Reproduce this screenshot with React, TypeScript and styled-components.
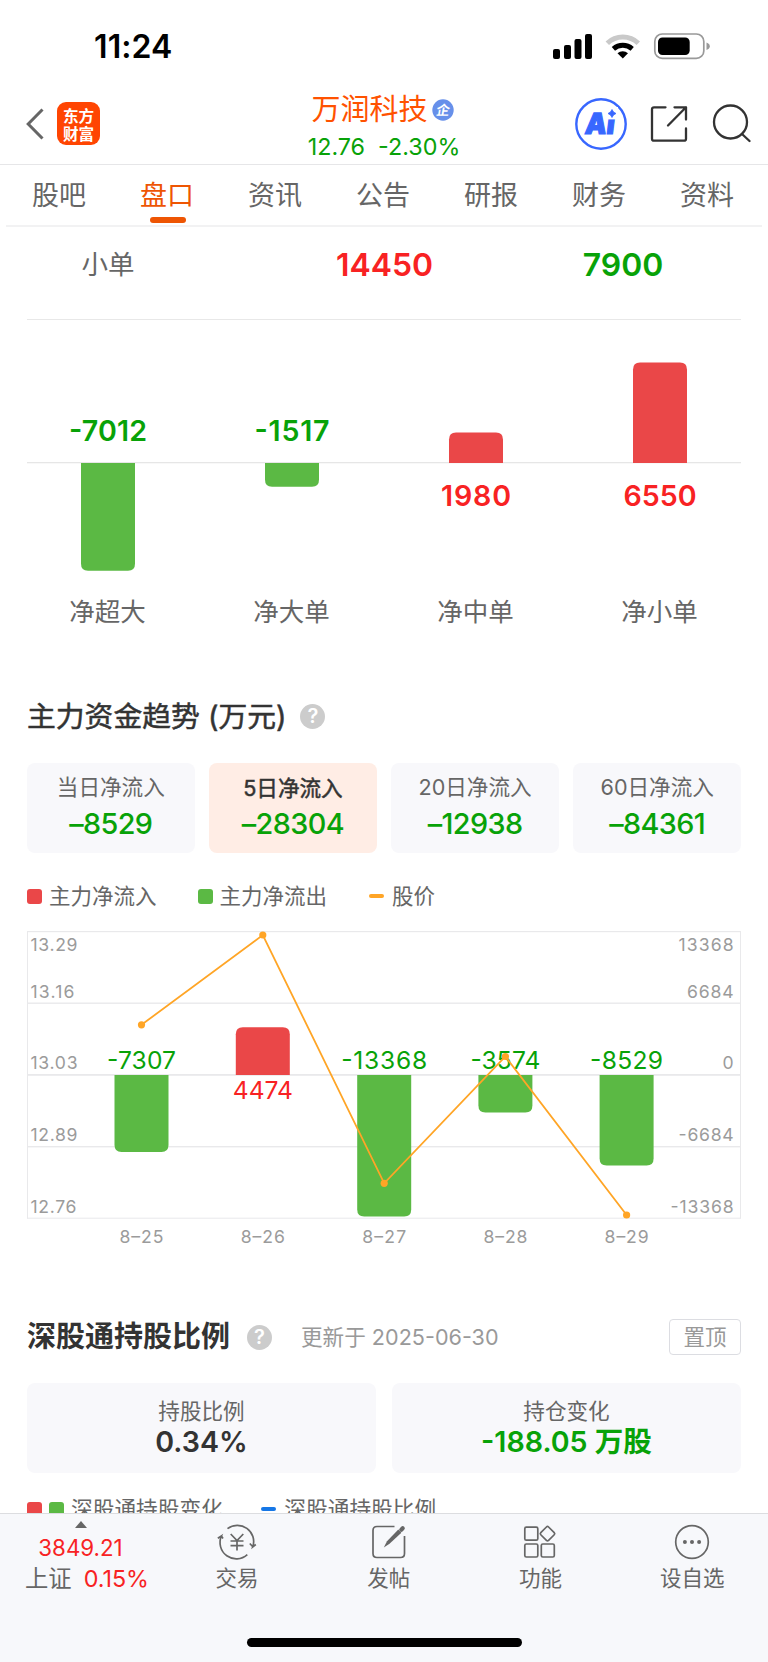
import React from 'react';
import styled, { createGlobalStyle } from 'styled-components';

const RED = '#f82223';
const GREEN = '#08a208';
const BAR_RED = '#ea4748';
const BAR_GREEN = '#5bb944';
const FONT = 'Inter, "Noto Sans CJK SC", sans-serif';

const Global = createGlobalStyle`
  * { box-sizing: border-box; }
  body { margin: 0; background: #fff; }
  svg { display: block; flex: none; }
  svg text { font-family: ${FONT}; }
`;

const Page = styled.div`
  width: 768px;
  height: 1662px;
  overflow: hidden;
  display: flex;
  flex-direction: column;
  background: #fff;
  color: #666;
  font-family: ${FONT};
  font-weight: 400;
  white-space: nowrap;
`;

interface TextProps {
  $size: number;
  $color?: string;
  $weight?: number;
  $spacing?: number;
  $stroke?: number;
}
const Text = styled.span<TextProps>`
  font-size: ${(p) => p.$size}px;
  line-height: ${(p) => Math.round(p.$size * 1.3)}px;
  color: ${(p) => p.$color ?? '#666'};
  font-weight: ${(p) => p.$weight ?? 400};
  letter-spacing: ${(p) => p.$spacing ?? 0}px;
  -webkit-text-stroke: ${(p) => p.$stroke ?? 0}px currentColor;
`;

const StatusBar = styled.div`
  flex: none;
  height: 92px;
  padding: 0 58px 0 94px;
  display: flex;
  justify-content: space-between;
  align-items: center;
`;
const Clock = styled(Text)`
  padding-top: 2px;
`;

const Header = styled.header`
  flex: none;
  height: 73px;
  display: grid;
  grid-template-columns: 240px 1fr 240px;
  border-bottom: 1px solid #e6e6e8;
`;
const HeaderLeft = styled.div`
  display: flex;
  align-items: center;
  padding: 0 0 9px 26px;
  gap: 12px;
  height: 72px;
`;
const Logo = styled.div`
  width: 43px;
  height: 43px;
  border-radius: 9px;
  background: #ff4502;
  color: #fff;
  font-family: "Noto Sans CJK SC", sans-serif;
  font-weight: 700;
  font-size: 15.6px;
  line-height: 18px;
  display: grid;
  place-content: center;
`;
const HeaderTitle = styled.div`
  display: flex;
  flex-direction: column;
  align-items: center;
`;
const NameLine = styled.div`
  display: flex;
  align-items: center;
  gap: 4px;
  height: 35px;
  padding-right: 3px;
`;
const QuoteLine = styled.div`
  display: flex;
  align-items: center;
  gap: 13px;
  height: 40px;
`;
const HeaderRight = styled.div`
  display: flex;
  justify-content: flex-end;
  align-items: center;
  height: 72px;
  padding: 0 17px 9px 0;
`;
const IconSlot = styled.div<{ $after: number }>`
  margin-right: ${(p) => p.$after}px;
`;

const Tabs = styled.nav`
  flex: none;
  height: 62px;
  margin: 0 6px;
  display: grid;
  grid-template-columns: repeat(7, 108px);
  border-bottom: 2px solid #f2f2f3;
`;
const Tab = styled.div<{ $active?: boolean }>`
  display: flex;
  flex-direction: column;
  align-items: center;
  padding-top: 13px;
  gap: 3px;
  font-size: 27px;
  line-height: 36px;
  color: ${(p) => (p.$active ? '#ee5503' : '#666')};
  &::after {
    content: '';
    width: 36px;
    height: 6px;
    border-radius: 3px;
    background: ${(p) => (p.$active ? '#ee5503' : 'transparent')};
  }
  span { margin-right: 2px; }
`;

const Content = styled.main`
  flex: none;
  height: 1286px;
  overflow: hidden;
  padding: 0 27px;
  display: flex;
  flex-direction: column;
`;
const OrderRow = styled.div`
  flex: none;
  height: 93px;
  padding: 0 0 18px;
  display: grid;
  grid-template-columns: 162px 391px 86px;
  align-items: center;
  justify-items: center;
  border-bottom: 1px solid #e8e8e8;
`;
const SectionHead = styled.div`
  flex: none;
  height: 38px;
  display: flex;
  align-items: center;
`;
const Help = styled.span<{ $left: number }>`
  width: 25px;
  height: 25px;
  margin-left: ${(p) => p.$left}px;
  border-radius: 50%;
  background: #ccc;
  color: #fff;
  font-size: 20px;
  font-weight: 600;
  line-height: 25px;
  text-align: center;
`;
const UpdateText = styled(Text)`
  margin-left: 29px;
  margin-right: auto;
`;
const PinButton = styled.button`
  width: 72px;
  height: 36px;
  padding: 0;
  border: 1px solid #dcdde2;
  border-radius: 4px;
  background: #fff;
  font: 400 21.5px/34px ${FONT};
  color: #999;
`;

const Cards = styled.div<{ $cols: number; $gap: number }>`
  flex: none;
  display: grid;
  grid-template-columns: repeat(${(p) => p.$cols}, 1fr);
  gap: ${(p) => p.$gap}px;
  height: 90px;
`;
const Card = styled.div<{ $active?: boolean; $top?: number }>`
  border-radius: 8px;
  background: ${(p) => (p.$active ? '#ffede5' : '#f8f8fb')};
  display: flex;
  flex-direction: column;
  align-items: center;
  padding-top: ${(p) => p.$top ?? 6}px;
`;
const CardLabel = styled(Text)<{ $drop?: number }>`
  line-height: 36px;
  padding-top: ${(p) => p.$drop ?? 0}px;
  margin-bottom: ${(p) => -(p.$drop ?? 0)}px;
`;
const CardValue = styled(Text)<{ $pull?: number }>`
  line-height: 38px;
  margin-top: ${(p) => p.$pull ?? 0}px;
`;

const Legend = styled.div`
  flex: none;
  height: 36px;
  display: flex;
  align-items: center;
`;
const Square = styled.i<{ $color: string }>`
  width: 15px;
  height: 15px;
  border-radius: 3px;
  background: ${(p) => p.$color};
  margin-right: 7px;
`;
const Dash = styled.i<{ $color: string }>`
  width: 15px;
  height: 4px;
  border-radius: 2px;
  background: ${(p) => p.$color};
  margin-right: 8px;
`;
const LegendText = styled(Text)<{ $after?: number }>`
  margin-right: ${(p) => p.$after ?? 0}px;
`;
const Spacer = styled.div<{ $h: number }>`
  flex: none;
  height: ${(p) => p.$h}px;
`;

const BottomBar = styled.footer`
  flex: none;
  height: 149px;
  border-top: 1px solid #dcdde0;
  background: #f7f8fb;
  display: flex;
  flex-direction: column;
  align-items: center;
`;
const NavRow = styled.div`
  width: 768px;
  height: 124px;
  display: grid;
  grid-template-columns: 161px repeat(4, 151.8px);
`;
const IndexBox = styled.div`
  display: flex;
  flex-direction: column;
  align-items: center;
  padding-top: 7px;
`;
const IndexValue = styled(Text)`
  margin-top: 4px;
  line-height: 31px;
`;
const IndexLine = styled.div`
  display: flex;
  align-items: center;
  gap: 12px;
  height: 32px;
  padding-left: 13px;
`;
const NavItem = styled.div`
  display: flex;
  flex-direction: column;
  align-items: center;
  padding-top: 8px;
  gap: 2px;
`;
const HomeIndicator = styled.div`
  width: 275px;
  height: 9px;
  border-radius: 5px;
  background: #000;
`;

const StatusIcons = () => (
  <svg width="158" height="28" viewBox="552 31 158 28">
    <rect x="553" y="48" width="7" height="10" rx="2" />
    <rect x="564" y="44" width="7" height="14" rx="2" />
    <rect x="574.5" y="38" width="7" height="20" rx="2" />
    <rect x="585" y="33" width="7" height="25" rx="2" />
    <path d="M607.3 42.2A22.5 22.5 0 0 1 638.3 42.2" fill="none" stroke="#c9c9c9" strokeWidth="5" />
    <path d="M613.4 47.8A14.5 14.5 0 0 1 632.2 47.8" fill="none" stroke="#000" strokeWidth="5" />
    <path d="M617.5 52.3A8 8 0 0 1 628 52.3L622.8 57.5Z" />
    <rect x="654.8" y="33" width="49" height="24.4" rx="7.5" fill="none" stroke="#999" strokeWidth="1.7" />
    <rect x="658" y="36.5" width="31.7" height="17.5" rx="4.5" />
    <path d="M706.5 41.5Q709.8 42.6 709.8 45.2T706.5 49Z" fill="#999" />
  </svg>
);

const BackIcon = () => (
  <svg width="19" height="34" viewBox="0 0 19 34">
    <path d="M16.5 2.5L2.2 17L16.5 31.5" fill="none" stroke="#666" strokeWidth="3" />
  </svg>
);

const CompanyBadge = () => (
  <svg width="22" height="22" viewBox="0 0 22 22">
    <circle cx="11" cy="11" r="10.7" fill="#6790ea" />
    <text x="10" y="15.8" fontSize="13.5" fontWeight="700" fill="#fff" textAnchor="middle" transform="translate(3 0) skewX(-10)">企</text>
  </svg>
);

const AiIcon = () => (
  <svg width="52" height="52" viewBox="0 0 52 52">
    <circle cx="26" cy="26" r="24.7" fill="none" stroke="#3867ff" strokeWidth="2.4" />
    <g transform="translate(4.2 0) skewX(-7)">
      <text x="9.5" y="35.6" fontSize="29" fontWeight="900" fill="#3867ff" stroke="#3867ff" strokeWidth="1.2" textLength="29.5" lengthAdjust="spacingAndGlyphs">Ai</text>
    </g>
    <rect x="31" y="9" width="12" height="12.4" fill="#fff" />
    <path d="M37 11.5Q38 14.5 41 15.5Q38 16.5 37 19.5Q36 16.5 33 15.5Q36 14.5 37 11.5Z" fill="#3867ff" stroke="#3867ff" strokeWidth=".8" />
  </svg>
);

const ShareIcon = () => (
  <svg width="38" height="38" viewBox="0 0 38 38" fill="none" stroke="#333" strokeWidth="2.3" strokeLinecap="round" strokeLinejoin="round">
    <path d="M15.5 2.3H4Q2 2.3 2 4.3V33.7Q2 35.7 4 35.7H34Q36 35.7 36 33.7V23.5" />
    <path d="M24.5 2.3H36V14.5M36 2.3L18 20.5" />
  </svg>
);

const SearchIcon = () => (
  <svg width="39" height="39" viewBox="0 0 39 39" fill="none" stroke="#333" strokeWidth="2.3" strokeLinecap="round">
    <circle cx="18.5" cy="18" r="16.5" />
    <path d="M30 30L37.5 37" />
  </svg>
);

const TradeIcon = () => (
  <svg width="40" height="40" viewBox="0 0 40 40" fill="none" stroke="#666" strokeWidth="1.7">
    <path d="M10.5 6.6A16.3 16.3 0 0 1 35.8 24.8L38.8 22.5M35.8 24.8L32.8 21.5" />
    <path d="M30.3 32.6A16.3 16.3 0 0 1 4.4 14L.8 16.2M4.4 14L6 16.5" />
    <path d="M13.7 12L20 18.6L26.3 12M20 18.6V28.6M13.5 19H26.5M13.5 23.6H26.5" />
  </svg>
);

const PostIcon = () => (
  <svg width="40" height="40" viewBox="0 0 40 40" fill="none" stroke="#666" strokeWidth="1.7">
    <path d="M25.5 4.5H8Q4 4.5 4 8.5V31.5Q4 35.5 8 35.5H31.5Q35.5 35.5 35.5 31.5V14" />
    <path d="M29.3 7.6L32.4 10.7L20.5 21.8L14.8 25.4L18 19.2Z" fill="#666" stroke="none" />
    <path d="M32.3 7.7L33.7 6.3" strokeWidth="4.2" strokeLinecap="round" />
  </svg>
);

const GridIcon = () => (
  <svg width="40" height="40" viewBox="0 0 40 40" fill="none" stroke="#666" strokeWidth="1.7">
    <rect x="4.8" y="5.2" width="13" height="13" rx="1.5" />
    <rect x="4.8" y="22" width="13" height="13" rx="1.5" />
    <rect x="21.3" y="22" width="13" height="13" rx="1.5" />
    <rect x="22" y="6.2" width="11" height="11" rx="1.5" transform="rotate(45 27.5 11.7)" />
  </svg>
);

const MoreIcon = () => (
  <svg width="40" height="40" viewBox="0 0 40 40">
    <circle cx="20" cy="20" r="16.3" fill="none" stroke="#666" strokeWidth="1.7" />
    <circle cx="12.9" cy="20" r="2" fill="#666" />
    <circle cx="20" cy="20" r="2" fill="#666" />
    <circle cx="27.1" cy="20" r="2" fill="#666" />
  </svg>
);

/** A bar whose two corners away from the zero line are rounded. */
const Bar = ({ x, zero, end }: { x: number; zero: number; end: number }) => {
  const s = end > zero ? 1 : -1;
  const r = 7;
  return (
    <path
      fill={s > 0 ? BAR_GREEN : BAR_RED}
      d={`M${x - 27} ${zero}V${end - s * r}Q${x - 27} ${end} ${x - 27 + r} ${end}H${x + 27 - r}Q${x + 27} ${end} ${x + 27} ${end - s * r}V${zero}Z`}
    />
  );
};

const netOrders = [
  { name: '净超大', value: '-7012', x: 81, end: 250.7, w: 78 },
  { name: '净大单', value: '-1517', x: 265, end: 166.7, w: 75 },
  { name: '净中单', value: '1980', x: 449, end: 112.5, w: 70 },
  { name: '净小单', value: '6550', x: 633, end: 42.5, w: 73 },
];

const NetOrderChart = () => (
  <svg width="714" height="320" viewBox="0 0 714 320">
    <rect y="142" width="714" height="1.3" fill="#e6e6e6" />
    {netOrders.map((o) => {
      const down = o.end > 143;
      return (
        <g key={o.name}>
          <Bar x={o.x} zero={143} end={o.end} />
          <text x={o.x - o.w / 2} y={down ? 121 : 185.7} textLength={o.w} fontSize="28.6" fontWeight="600" fill={down ? GREEN : RED}>
            {o.value}
          </text>
          <text x={o.x - 0.5} y="301.2" textAnchor="middle" fontSize="25.5" fill="#666">{o.name}</text>
        </g>
      );
    })}
  </svg>
);

const days = [
  { date: '8–25', value: '-7307', x: 114.5, end: 222, price: 94.8, w: 69 },
  { date: '8–26', value: '4474', x: 235.8, end: 97.3, price: 5, w: 60 },
  { date: '8–27', value: '-13368', x: 357.2, end: 286.5, price: 253.3, w: 86 },
  { date: '8–28', value: '-3574', x: 478.4, end: 182.5, price: 126.5, w: 70 },
  { date: '8–29', value: '-8529', x: 599.6, end: 235.5, price: 285, w: 73 },
];
const axis = [
  { left: '13.29', right: '13368', y: 21, lw: 47, rw: 55 },
  { left: '13.16', right: '6684', y: 67.5, lw: 44, rw: 46.5 },
  { left: '13.03', right: '0', y: 139, lw: 47, rw: 11 },
  { left: '12.89', right: '-6684', y: 211, lw: 47, rw: 55 },
  { left: '12.76', right: '-13368', y: 283, lw: 46, rw: 63 },
];

const TrendChart = () => (
  <svg width="714" height="320" viewBox="0 0 714 320">
    <g fill="#e9e9eb">
      <rect y="1" width="714" height="1.2" />
      <rect y="72.5" width="714" height="1.4" />
      <rect y="144" width="714" height="1.8" />
      <rect y="216" width="714" height="1.4" />
      <rect y="287.7" width="714" height="1" />
      <rect y="1" width="1" height="287.5" />
      <rect x="713" y="1" width="1" height="287.5" />
    </g>
    {axis.map((a) => (
      <g key={a.left} fill="#9b9b9b" fontSize="17.6">
        <text x="3.5" y={a.y} textLength={a.lw}>{a.left}</text>
        <text x={706.6 - a.rw} y={a.y} textLength={a.rw}>{a.right}</text>
      </g>
    ))}
    {days.map((d) => {
      const down = d.end > 145;
      return (
        <g key={d.date}>
          <Bar x={d.x} zero={145} end={d.end} />
          <text x={d.x - d.w / 2} y={down ? 139.2 : 169} textLength={d.w} fontSize="24.6" fill={down ? GREEN : RED}>{d.value}</text>
          <text x={d.x - 22} y="313" textLength="44" fontSize="17.6" fill="#9b9b9b">{d.date}</text>
        </g>
      );
    })}
    <polyline points={days.map((d) => `${d.x},${d.price}`).join(' ')} fill="none" stroke="#ffa526" strokeWidth="1.8" />
    {days.map((d) => (
      <circle key={d.date} cx={d.x} cy={d.price} r="3.6" fill="#ffa526" />
    ))}
  </svg>
);

const periods = [
  { label: '当日净流入', value: '–8529' },
  { label: '5日净流入', value: '–28304', active: true },
  { label: '20日净流入', value: '–12938' },
  { label: '60日净流入', value: '–84361' },
];

const navItems = [
  { label: '交易', icon: <TradeIcon /> },
  { label: '发帖', icon: <PostIcon /> },
  { label: '功能', icon: <GridIcon /> },
  { label: '设自选', icon: <MoreIcon /> },
];

export default function App() {
  return (
    <Page>
      <Global />
      <StatusBar>
        <Clock $size={32} $color="#000" $weight={600} $spacing={0.1}>11:24</Clock>
        <StatusIcons />
      </StatusBar>
      <Header>
        <HeaderLeft>
          <BackIcon />
          <Logo><span>东方</span><span>财富</span></Logo>
        </HeaderLeft>
        <HeaderTitle>
          <NameLine>
            <Text $size={29} $color="#ff5200">万润科技</Text>
            <CompanyBadge />
          </NameLine>
          <QuoteLine>
            <Text $size={23.3} $color={GREEN}>12.76</Text>
            <Text $size={23.3} $color={GREEN}>-2.30%</Text>
          </QuoteLine>
        </HeaderTitle>
        <HeaderRight>
          <IconSlot $after={23}><AiIcon /></IconSlot>
          <IconSlot $after={24}><ShareIcon /></IconSlot>
          <SearchIcon />
        </HeaderRight>
      </Header>
      <Tabs>
        {['股吧', '盘口', '资讯', '公告', '研报', '财务', '资料'].map((t) => (
          <Tab key={t} $active={t === '盘口'}><span>{t}</span></Tab>
        ))}
      </Tabs>
      <Content>
        <OrderRow>
          <Text $size={26.5}>小单</Text>
          <Text $size={31.9} $weight={600} $color={RED}>14450</Text>
          <Text $size={31.9} $weight={600} $color={GREEN}>7900</Text>
        </OrderRow>
        <NetOrderChart />
        <Spacer $h={57} />
        <SectionHead>
          <Text $size={28.8} $stroke={0.5} $color="#333">主力资金趋势 (万元)</Text>
          <Help $left={14}>?</Help>
        </SectionHead>
        <Spacer $h={28} />
        <Cards $cols={4} $gap={14.6}>
          {periods.map((p) => (
            <Card key={p.label} $active={p.active}>
              <CardLabel
                $size={21.6}
                $stroke={p.active ? 0.5 : 0}
                $drop={p.active ? 1 : 0}
                $color={p.active ? '#333' : '#666'}
              >
                {p.label}
              </CardLabel>
              <CardValue $size={28.8} $weight={500} $color={GREEN} $spacing={-0.6}>{p.value}</CardValue>
            </Card>
          ))}
        </Cards>
        <Spacer $h={25} />
        <Legend>
          <Square $color={BAR_RED} /><LegendText $size={21.5} $after={41}>主力净流入</LegendText>
          <Square $color={BAR_GREEN} /><LegendText $size={21.5} $after={42}>主力净流出</LegendText>
          <Dash $color="#ffa526" /><LegendText $size={21.5}>股价</LegendText>
        </Legend>
        <Spacer $h={16} />
        <TrendChart />
        <Spacer $h={68.4} />
        <SectionHead>
          <Text $size={29} $weight={600} $color="#333">深股通持股比例</Text>
          <Help $left={17}>?</Help>
          <UpdateText $size={21.6} $color="#999">更新于 2025-06-30</UpdateText>
          <PinButton>置顶</PinButton>
        </SectionHead>
        <Spacer $h={27} />
        <Cards $cols={2} $gap={16}>
          <Card $top={10}>
            <CardLabel $size={21.6}>持股比例</CardLabel>
            <CardValue $size={28.6} $weight={600} $color="#333" $pull={-6}>0.34%</CardValue>
          </Card>
          <Card $top={10}>
            <CardLabel $size={21.6}>持仓变化</CardLabel>
            <CardValue $size={28.6} $weight={600} $color={GREEN} $pull={-6}>-188.05 万股</CardValue>
          </Card>
        </Cards>
        <Spacer $h={18} />
        <Legend>
          <Square $color={BAR_RED} /><Square $color={BAR_GREEN} />
          <LegendText $size={21.7} $after={38.5}>深股通持股变化</LegendText>
          <Dash $color="#1677e6" /><LegendText $size={21.7}>深股通持股比例</LegendText>
        </Legend>
      </Content>
      <BottomBar>
        <NavRow>
          <IndexBox>
            <svg width="12" height="7" viewBox="0 0 12 7"><path d="M6 0L12 7H0Z" fill="#666" /></svg>
            <IndexValue $size={22.3} $color={RED}>3849.21</IndexValue>
            <IndexLine>
              <Text $size={23.3}>上证</Text>
              <Text $size={23.3} $color={RED}>0.15%</Text>
            </IndexLine>
          </IndexBox>
          {navItems.map((n) => (
            <NavItem key={n.label}>
              {n.icon}
              <Text $size={21.5}>{n.label}</Text>
            </NavItem>
          ))}
        </NavRow>
        <HomeIndicator />
      </BottomBar>
    </Page>
  );
}
